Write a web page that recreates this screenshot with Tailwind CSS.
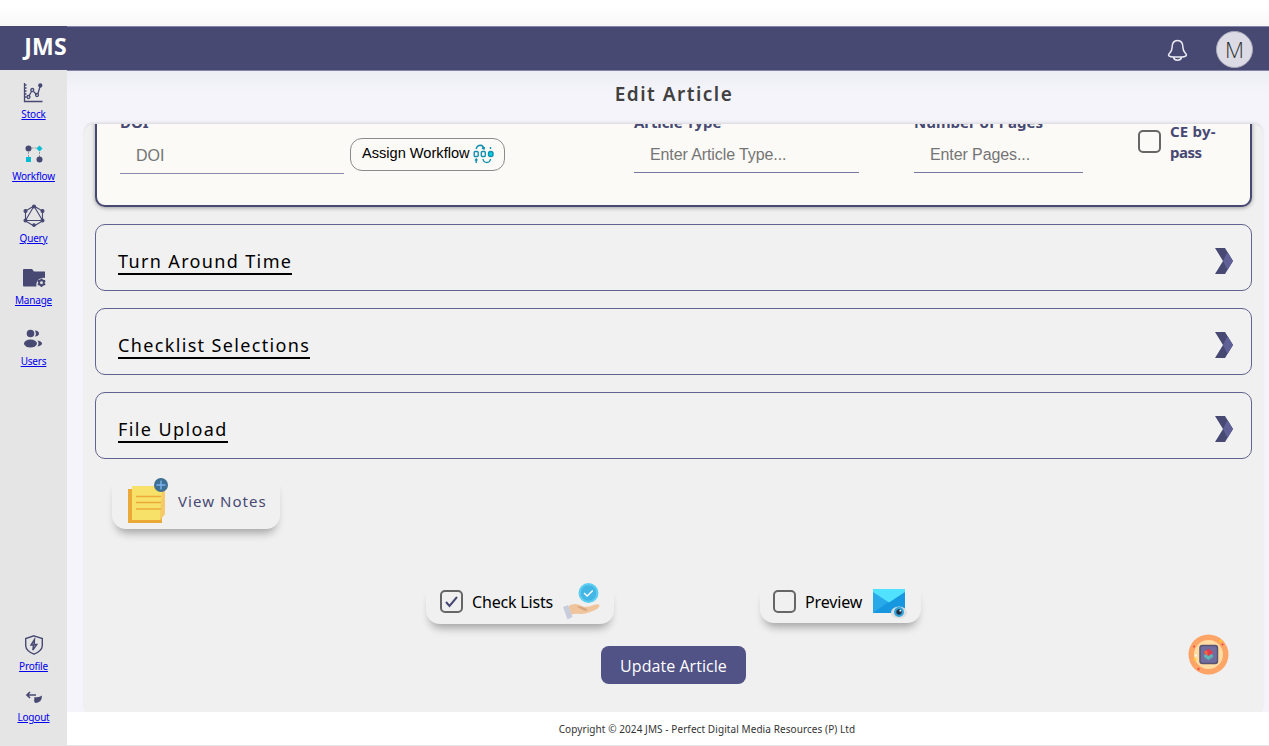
<!DOCTYPE html>
<html lang="en">
<head>
<meta charset="utf-8">
<title>Edit Article</title>
<script src="https://cdn.jsdelivr.net/npm/@tailwindcss/browser@4"></script>
</head>
<body class="h-[746px] w-[1269px] overflow-hidden bg-white font-['Noto_Sans',sans-serif] text-black">
<div class="flex h-full flex-col">
  <div class="h-[26px] shrink-0 bg-linear-to-b from-white from-30% to-[#f7f7f7]"></div>
  <div class="flex h-[719px]">

    <aside class="flex w-[67px] shrink-0 flex-col bg-[#e5e5e5]">
      <div class="flex h-11 shrink-0 items-center justify-end bg-[#474973] text-[23px] font-bold tracking-[0.3px] text-white"><span class="-mt-1">JMS</span></div>
      <nav class="flex grow flex-col items-center text-[10px] leading-[14px] text-[#0000ee]">
        <a class="mt-[12px] flex h-[62px] flex-col items-center gap-[4px] underline">
          <svg class="h-[21px] w-[20px]" viewBox="0 0 20 21" fill="none" stroke="#474973" stroke-width="1.3"><path d="M1.500 1v18.500h18M2 3h1.500M2 6h1.500M2 9h1.500M2 12h1.500M2 15h1.500"/><path d="m6 14 2.700-5M10.500 9.500l3 3M15 11.500l2-7" /><circle cx="5.500" cy="15" r="1.500"/><circle cx="9.300" cy="8" r="1.500"/><circle cx="14" cy="13" r="1.500"/><circle cx="17.300" cy="3.500" r="1.500" fill="#474973"/></svg>
          <span class="tracking-[-0.2px]">Stock</span></a>
        <a class="flex h-[62px] flex-col items-center gap-[4px] underline">
          <svg class="h-[21px] w-[20px]" viewBox="0 0 20 21"><path d="M4.500 4h11v11" fill="none" stroke="#999" stroke-width="1" stroke-dasharray="2 1"/><path d="M4.500 5v9" stroke="#999" stroke-dasharray="2 1"/><circle cx="4.500" cy="4.500" r="3" fill="#474973"/><circle cx="15.500" cy="15.500" r="3" fill="#474973"/><path d="m15.500 1.500 3 3-3 3-3-3z" fill="#00bcd4"/><path d="M2 13h5v5H2z" fill="#00bcd4"/></svg>
          <span class="tracking-[-0.2px]">Workflow</span></a>
        <a class="flex h-[62px] flex-col items-center gap-[4px] underline">
          <svg class="-mt-0.5 h-[23px] w-[22px]" viewBox="0 0 22 23" fill="#474973" stroke="#474973" stroke-width="1.100"><path fill="none" d="m11 2 8.500 5v10L11 22l-8.500-5V7zM11 2l8.500 14.500h-17z"/><circle cx="11" cy="2.500" r="1.500"/><circle cx="19.500" cy="7" r="1.500"/><circle cx="19.500" cy="16.500" r="1.500"/><circle cx="11" cy="21" r="1.300"/><circle cx="2.500" cy="16.500" r="1.500"/><circle cx="2.500" cy="7" r="1.500"/></svg>
          <span class="tracking-[-0.2px]">Query</span></a>
        <a class="flex h-[61px] flex-col items-center gap-[4px] underline">
          <svg class="-mt-px h-[22px] w-[24px]" viewBox="0 0 24 22"><path d="M2 2h8l2 2.500h11V11a7 7 0 0 0-8.500 8.500H2q-1 0-1-1V3q0-1 1-1z" fill="#474973"/><path d="M19.500 11.500v8.400M15.800 13.600l7.400 4.200M15.800 17.800l7.400-4.200" stroke="#474973" stroke-width="1.800"/><circle cx="19.500" cy="15.700" r="2.400" fill="#e5e5e5" stroke="#474973" stroke-width="1.900"/></svg>
          <span class="tracking-[-0.2px]">Manage</span></a>
        <a class="flex h-[62px] flex-col items-center gap-[5px] underline">
          <svg class="-mt-px h-[21px] w-[20px]" viewBox="0 0 20 21" fill="#474973"><circle cx="7.500" cy="5.500" r="3.800"/><ellipse cx="7.500" cy="15.500" rx="6.500" ry="4"/><path d="M12 2.500q4 .3 4 3t-4 3q1.800-3 0-6zM14.500 12.500q4.500 1 4.500 3t-4.500 3q2-3 0-6z"/></svg>
          <span class="tracking-[-0.2px]">Users</span></a>
        <a class="mt-auto flex h-[56px] flex-col items-center gap-[4px] underline">
          <svg class="h-[20px] w-[20px]" viewBox="0 0 20 20" fill="none" stroke="#474973" stroke-width="1.400"><path d="m10 .8 8.300 2.700v7.500q-.5 5-8.300 8.200Q2.200 16 1.700 11V3.500z"/><path d="m10.500 4.500-3.500 5.500h2.500l-.7 5 4-5.500h-2.600z" fill="#474973" fill-opacity=".35"/></svg>
          <span class="tracking-[-0.2px]">Profile</span></a>
        <a class="flex h-[54px] flex-col items-center gap-[5px] underline">
          <svg class="-mt-px h-[15px] w-[18px]" viewBox="0 0 18 15"><path d="M5 2 2 5l3 3M2.500 5h8.500" fill="none" stroke="#474973" stroke-width="1.700"/><path d="M9.500 7q4.500 1 7.500-1.500 0 7.500-7 7.500-1.500-2-.5-6z" fill="#474973"/></svg>
          <span class="tracking-[-0.2px]">Logout</span></a>
      </nav>
    </aside>

    <main class="flex w-[1202px] flex-col bg-[#f4f4fa]">
      <header class="flex h-[45px] shrink-0 items-center justify-end gap-[28px] border-y border-[#8485a8] bg-[#474973] pt-px pr-[16px]">
        <svg class="mt-[3px] h-[23px] w-[21px]" viewBox="0 0 21 23" fill="none" stroke="#ecebf3" stroke-width="1.500"><path d="M10.500 1.500C6 1.500 5 5 5 9c0 4-3.500 5.500-3.500 7 0 1.800 3 2 9 2s9-.2 9-2c0-1.500-3.500-3-3.500-7 0-4-1-7.500-5.500-7.500zM6.500 18.500c1 3.600 7 3.600 8 0"/></svg>
        <div class="flex size-[37px] items-center justify-center rounded-full border border-[#a9a9bd] bg-[#dcdbe5] font-['Open_Sans',sans-serif] text-[22px] font-light text-[#333]"><span>M</span></div>
      </header>
      <div class="flex h-[53px] shrink-0 items-center justify-center bg-linear-to-b from-[#ededf4] to-[#f4f4fa] to-40% pl-[12px]">
        <h1 class="-mt-[7px] text-[19px] font-semibold tracking-[1.5px] text-[#404040]">Edit Article</h1>
      </div>
      <section class="ml-[17px] h-[588px] w-[1179px] overflow-hidden rounded-t-[10px] bg-[#f0f0f0] px-[11px] shadow-[0_-2px_4px_-2px_rgba(0,0,0,0.2)]">
        <div class="-mt-5 flex h-[103px] w-[1157px] rounded-[10px] border-x-[2.5px] border-b-[2.5px] border-[#474973] bg-[#fbfaf6] pl-[23px] font-['Liberation_Sans',sans-serif] text-[16px] text-[#757575] shadow-[0_1px_4px_rgba(0,0,0,0.35)]">
          <div class="w-[224px] pt-[9px]">
            <div class="h-[22px] font-['Noto_Sans',sans-serif] text-[15px] leading-[18px] font-bold text-[#474973]">DOI</div>
            <div class="flex h-[39px] items-center border-b border-[#8b8bab] pt-[3px] pl-4">DOI</div>
          </div>
          <div class="mt-[34px] ml-[6px] flex h-[33px] w-[155px] items-center gap-[3px] rounded-[12px] border border-[#8b8b8b] pl-[11px] text-[14.6px] text-black">
            <span class="-mt-[2px] whitespace-nowrap">Assign Workflow</span>
            <svg class="-mt-0.5 h-[20px] w-[21px]" viewBox="0 0 21 20" fill="none" stroke="#138fb0" stroke-width="1.400"><rect x="1.200" y="7.500" width="4" height="5" rx="1"/><rect x="8.300" y="7.500" width="4" height="5" rx="1"/><rect x="15.500" y="7.500" width="4.500" height="5" rx="2" fill="#00d0df"/><path d="M3.200 5q1-3.700 4.500-3.700 2.300.2 3 3M9 4l2 1 .500-2M17.500 3v2M3.200 19v-4M2 16.500l1.200-1.500 1.200 1.500M10 15q.5 3.500 4 3.500 3 0 3.500-3.500"/></svg>
          </div>
          <div class="ml-[129px] w-[225px] pt-[8px]">
            <div class="h-[22px] font-['Noto_Sans',sans-serif] text-[15px] leading-[20px] font-bold tracking-[-0.1px] text-[#474973]">Article Type</div>
            <div class="flex h-[39px] items-center border-b border-[#7778a0] pt-[3px] pl-4 tracking-[-0.1px]">Enter Article Type...</div>
          </div>
          <div class="ml-[55px] w-[169px] pt-[8px]">
            <div class="h-[22px] font-['Noto_Sans',sans-serif] text-[15px] leading-[20px] font-bold whitespace-nowrap text-[#474973]">Number of Pages</div>
            <div class="flex h-[39px] items-center border-b border-[#7778a0] pt-[3px] pl-4 tracking-[-0.1px]">Enter Pages...</div>
          </div>
          <div class="ml-[55px] flex gap-[9px]">
            <div class="mt-[26px] size-[23px] rounded-[5px] border-2 border-[#666]"></div>
            <div class="mt-[17px] font-['Noto_Sans',sans-serif] text-[15px] leading-[20.500px] font-bold tracking-[0.2px] whitespace-nowrap text-[#474973]">CE by-<br><span class="tracking-[-0.5px]">pass</span></div>
          </div>
        </div>

        <div class="mt-[17px] flex h-[67px] w-[1157px] items-center justify-between rounded-[10px] border border-[#62638e] bg-[#f1f1f1] pr-[18px] pl-[22px]">
          <span class="mt-2 h-[27px] border-b-2 border-black text-[18px] leading-[26px] tracking-[1.360px]">Turn Around Time</span>
          <svg class="mt-[7px] h-[26px] w-[18px]" viewBox="0 0 18 26"><path d="M0 0h10l8 13-8 13H0l8-13z" fill="#474973"/><path d="m12.500 4 5.500 9-5.500 9L8 13z" fill="#5f6096"/></svg>
        </div>
        <div class="mt-[17px] flex h-[67px] w-[1157px] items-center justify-between rounded-[10px] border border-[#62638e] bg-[#f1f1f1] pr-[18px] pl-[22px]">
          <span class="mt-2 h-[27px] border-b-2 border-black text-[18px] leading-[26px] tracking-[1.350px]">Checklist Selections</span>
          <svg class="mt-[7px] h-[26px] w-[18px]" viewBox="0 0 18 26"><path d="M0 0h10l8 13-8 13H0l8-13z" fill="#474973"/><path d="m12.500 4 5.500 9-5.500 9L8 13z" fill="#5f6096"/></svg>
        </div>
        <div class="mt-[17px] flex h-[67px] w-[1157px] items-center justify-between rounded-[10px] border border-[#62638e] bg-[#f1f1f1] pr-[18px] pl-[22px]">
          <span class="mt-2 h-[27px] border-b-2 border-black text-[18px] leading-[26px] tracking-[1.400px]">File Upload</span>
          <svg class="mt-[7px] h-[26px] w-[18px]" viewBox="0 0 18 26"><path d="M0 0h10l8 13-8 13H0l8-13z" fill="#474973"/><path d="m12.500 4 5.500 9-5.500 9L8 13z" fill="#5f6096"/></svg>
        </div>

        <div class="mt-[15px] ml-[17px] flex h-[55px] w-[168px] items-center gap-[9px] rounded-[14px] bg-[#f0f0f0] pl-[15px] shadow-[0_8px_9px_-4px_rgba(0,0,0,0.32)]">
          <svg class="-mt-[2px] h-[47px] w-[42px]" viewBox="0 0 42 47"><path d="M1 12h34v34H1z" fill="#eba937"/><path d="M5 9h33v28l-5 6H5z" fill="#f8e169"/><path d="M35 14h3v23l-5 6V38z" fill="#f5ca68"/><path d="M9 19.500h25M9 25.500h25M9 32h25" stroke="#eba937" stroke-width="1.300"/><circle cx="34" cy="8" r="7" fill="#3f6f92"/><path d="M34 3.500v9M29.500 8h9" stroke="#78b4ef" stroke-width="1.400"/></svg>
          <span class="-mt-px text-[15px] tracking-[1.050px] whitespace-nowrap text-[#474973]">View Notes</span>
        </div>

        <div class="mt-[52px] flex items-start pl-[331px]">
          <div class="flex h-[43px] w-[188px] items-center rounded-[14px] bg-[#f0f0f0] pl-[14px] shadow-[0_8px_9px_-4px_rgba(0,0,0,0.32)]">
            <div class="mt-[-2px] flex size-[23px] items-center justify-center rounded-[5px] border-2 border-[#666]"><svg class="h-[13px] w-[15px]" viewBox="0 0 15 13" fill="none" stroke="#474973" stroke-width="2"><path d="m2 7 3.500 4 7.500-9"/></svg></div>
            <span class="-mt-px ml-[9px] w-[91px] text-[16px] tracking-[-0.180px] whitespace-nowrap">Check Lists</span>
            <svg class="-mt-[3px] h-[38px] w-[38px]" viewBox="0 0 38 38"><circle cx="25.500" cy="11" r="10" fill="#5bcdf0"/><circle cx="25.500" cy="11" r="7.800" fill="#43b6e5"/><path d="m21 11 3.200 3 5.500-5.500" fill="none" stroke="#fff" stroke-width="1.400"/><path d="M5.500 24q5-3 10-1.500l6 2.500q4 0 11-2.500 4.500-.8 4 1.500-1 3-8 5.500-7 3-12 2.500-5-.8-8.500 1z" fill="#f0c49c"/><path d="m13.500 24.500 6.500 3.500q4 1.500 4.500 0 0-1-3-2l-4-1.500z" fill="#d6a57e"/><path d="m0 25 5-2 4.500 12-5 2.500z" fill="#c8cddd"/></svg>
          </div>
          <div class="ml-[146px] flex h-[42px] w-[161px] items-center rounded-[14px] bg-[#f0f0f0] pl-[13px] shadow-[0_8px_9px_-4px_rgba(0,0,0,0.32)]">
            <div class="mt-[-1px] size-[23px] rounded-[5px] border-2 border-[#666]"></div>
            <span class="ml-[9px] w-[68px] text-[16px] tracking-[-0.150px]">Preview</span>
            <svg class="mt-[3px] h-[32px] w-[34px]" viewBox="0 0 34 32"><path d="M0 1h32v24H0z" fill="#1797df"/><path d="M0 1v24L18 12z" fill="#28aae9"/><path d="M0 1h32v3L16 14.500 0 4z" fill="#50e2ff"/><ellipse cx="26" cy="24.500" rx="8" ry="6" fill="#dedede"/><circle cx="26" cy="24" r="5" fill="#31a6dc"/><circle cx="26" cy="24" r="2.700" fill="#202d43"/><circle cx="27.300" cy="22.700" r=".9" fill="#fff"/></svg>
          </div>
        </div>

        <div class="mt-[22px] flex pl-[506px]">
          <button class="h-[38px] w-[145px] rounded-[8px] bg-[#515285] pt-px font-['Open_Sans',sans-serif] text-[16px] tracking-[0.05px] text-white">Update Article</button>
        </div>
      </section>
      <footer class="flex h-[33px] shrink-0 items-center justify-center bg-white pt-[2px] pl-[78px] text-[10px] tracking-[0.080px] text-[#333]">Copyright © 2024 JMS - Perfect Digital Media Resources (P) Ltd</footer>
    </main>
  </div>
  <div class="h-px bg-[#e5e5e5]"></div>
</div>

<button class="absolute top-[634px] left-[1188px] size-[41px]">
  <svg viewBox="0 0 41 41"><circle cx="20.500" cy="20.500" r="20" fill="#fda467"/><circle cx="20.500" cy="20.500" r="14.500" fill="#ffdda2"/><rect x="12" y="11.500" width="17.500" height="18" rx="2.500" fill="#6f6e9f" stroke="#5a5271" stroke-width="1.500"/><path d="m16 21 4.500-2.500L25 21v2l-4.500 3-4.500-3z" fill="#5fb6b5"/><path d="m20.500 14.500 5 4-5 3.500-5-3.500z" fill="#df3c4e"/><path d="m16 17.500 3-1 1 4-2 .5z" fill="#f4683f"/><circle cx="32.500" cy="7" r="1.600" fill="#fdc12e"/><circle cx="7" cy="25.500" r="1.500" fill="#fdc83e"/><circle cx="8" cy="21.500" r="1" fill="#fff"/><circle cx="34.500" cy="10.500" r="1.100" fill="#ef4b50"/><circle cx="6" cy="12.500" r="1.100" fill="#ef4b50"/><circle cx="10.500" cy="35" r="1.200" fill="#ef4b50"/></svg>
</button>
</body>
</html>
